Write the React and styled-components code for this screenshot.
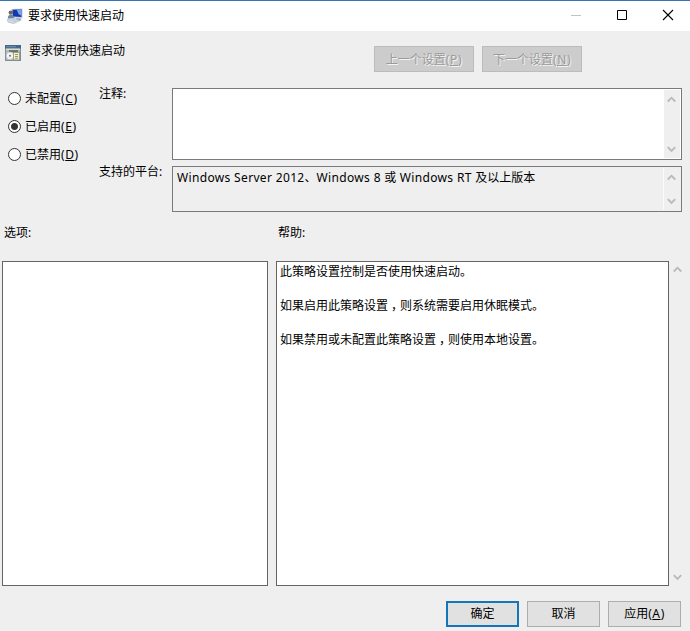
import React, { useState } from 'react';
import styled, { createGlobalStyle } from 'styled-components';

const GlobalStyle = createGlobalStyle`
  * {
    box-sizing: border-box;
  }
  body {
    margin: 0;
    background: #efefef;
  }
`;

const Window = styled.div`
  display: flex;
  flex-direction: column;
  width: 690px;
  height: 631px;
  overflow: hidden;
  background: #efefef;
  color: #000;
  font-family: "Noto Sans", "Noto Sans CJK SC", sans-serif;
  font-size: 12px;
  line-height: 16px;
`;

const TitleBar = styled.header`
  display: flex;
  align-items: center;
  height: 31px;
  padding: 0 16px 0 7px;
  border-top: 1px solid #3577b5;
  background: #fff;
`;

const Title = styled.span`
  flex: 1;
  margin-left: 5px;
`;

const WindowControls = styled.div`
  display: flex;
  gap: 34px;
  padding-bottom: 2px;
`;

const Header = styled.div`
  display: flex;
  height: 57px;
  padding-left: 5px;
`;

const HeaderIcon = styled.div`
  width: 16px;
  padding-top: 14px;
`;

const PolicyName = styled.div`
  width: 345px;
  padding: 12px 0 0 8px;
`;

const NavButtons = styled.div`
  display: flex;
  gap: 8px;
  padding: 15px 0 0 8px;
`;

const Button = styled.button`
  width: ${(props) => (props.$wide ? 100 : 73)}px;
  height: 26px;
  padding: 0;
  border: ${(props) => (props.$primary ? '2px solid #1874b8' : '1px solid #adadad')};
  background: #e1e1e1;
  color: #000;
  font: inherit;

  &:disabled {
    padding-top: 1px;
    border-color: #bcbcbc;
    background: #cccccc;
    color: #9b9b9b;
    text-shadow: 1px 1px 0 #f4f4f4;
  }
`;

const AccessKey = styled.span`
  letter-spacing: 0.6px;
`;

const Settings = styled.div`
  display: flex;
  height: 124px;
`;

const RadioGroup = styled.div`
  display: flex;
  flex-direction: column;
  gap: 12px;
  width: 99px;
  padding: 2px 0 0 8px;
`;

const RadioLabel = styled.label`
  display: flex;
  align-items: center;
  gap: 4px;
  height: 16px;
`;

const RadioText = styled.span`
  padding-top: 2px;
`;

const Radio = styled.input`
  appearance: none;
  width: 13px;
  height: 13px;
  margin: 0;
  border: 1px solid #333;
  border-radius: 50%;
  background: #fff;

  &:checked {
    background: radial-gradient(circle, #333 3px, #fff 4px);
  }
`;

const FieldGrid = styled.div`
  display: grid;
  grid-template-columns: 73px 510px;
  grid-template-rows: 72px 46px;
  row-gap: 6px;
`;

const FieldLabel = styled.div`
  margin-top: -2px;
`;

const Field = styled.div`
  display: flex;
  border: 1px solid #7a7a7a;
  padding: 1px;
  background: ${(props) => (props.$readOnly ? '#efefef' : '#fff')};
`;

const FieldText = styled.div`
  flex: 1;
  padding: 2px 0 0 3px;
  white-space: nowrap;
`;

const Latin = styled.span`
  letter-spacing: 0.34px;
`;

const ScrollBar = styled.div`
  display: flex;
  flex-direction: column;
  align-items: center;
  justify-content: space-between;
  width: ${(props) => (props.$outer ? 17 : 16)}px;
  padding: ${(props) => (props.$outer ? '5px 0 5px' : '6px 1px 5px 0')};
  background: #efefef;
  box-shadow: ${(props) => (props.$divided ? '-1px 0 0 #fbfbfb' : 'none')};
`;

const PanelLabels = styled.div`
  display: flex;
  height: 49px;
  padding: 13px 0 0 4px;
`;

const PanelLabel = styled.div`
  width: 274px;
`;

const Panels = styled.div`
  display: flex;
  height: 325px;
  padding-left: 2px;
`;

const OptionsPanel = styled.div`
  width: 266px;
  margin-right: 8px;
  border: 1px solid #646464;
  background: #fff;
`;

const HelpPanel = styled.div`
  width: 393px;
  padding: 1px 3px;
  border: 1px solid #646464;
  background: #fff;
  line-height: 17px;
`;

const Paragraph = styled.p`
  margin: 0 0 17px;
`;

// half-width glyph centred in a full-width cell
const Comma = styled.span`
  padding: 0 3px;
  font-feature-settings: "halt";
`;

const Footer = styled.footer`
  display: flex;
  justify-content: flex-end;
  gap: 8px;
  padding: 15px 9px 0 0;
`;

const Chevron = ({ down }) => (
  <svg width="9" height="7" viewBox="0 0 9 7" fill="none" stroke="#b9b9b9" strokeWidth="1.8">
    <path d={down ? 'M0.8 1.2L4.5 5L8.2 1.2' : 'M0.8 5.5L4.5 1.7L8.2 5.5'} />
  </svg>
);

const Scroll = (props) => (
  <ScrollBar {...props}>
    <Chevron />
    <Chevron down />
  </ScrollBar>
);

const Key = ({ children }) => (
  <AccessKey>(<u>{children}</u>)</AccessKey>
);

const ComputerIcon = () => (
  <svg width="16" height="16" viewBox="0 0 16 16">
    <path d="M4.5 1L15.5 0.5V10.5L5 9.5Z" fill="#c3cede" />
    <path d="M5.5 1.8L14.5 1.3V9L6 8.5Z" fill="#1537ae" />
    <path d="M9.5 1.6L14.5 1.3V8L11.5 6Z" fill="#7aa2ea" />
    <path d="M9 10.3H13.5L14.5 12.5H8Z" fill="#9ba7b8" />
    <circle cx="3.8" cy="4.6" r="2.2" fill="#6b685b" />
    <path d="M0.8 10.5Q0.8 6.8 3.8 6.8Q7 6.8 7.3 10.5Z" fill="#6585ad" />
    <path d="M0.5 11.5L6 10L13 12.5L6.5 15.6L1 14Z" fill="#dce2ea" stroke="#98a6b8" strokeWidth="0.6" />
    <path d="M2.5 12.2L9 14M4.5 11.2L10.5 13.2" stroke="#a8b4c3" strokeWidth="0.6" />
  </svg>
);

const PolicyIcon = () => (
  <svg width="16" height="16" viewBox="0 0 16 16">
    <rect width="16" height="16" fill="#7d8f9c" />
    <rect width="16" height="3.5" fill="#44658c" />
    <rect x="1" y="1.4" width="10" height="0.8" fill="#7e9bb8" />
    <rect x="1" y="3.5" width="14" height="2" fill="#dcdcc8" />
    <rect x="1" y="5.5" width="14" height="9.5" fill="#b4bcb8" />
    <rect x="4" y="5.3" width="9" height="1.5" fill="#50606a" />
    <circle cx="5" cy="10.8" r="3.8" fill="#f4f4f4" stroke="#a3afb2" strokeWidth="0.5" />
    <circle cx="5" cy="10.8" r="1" fill="#77705d" />
    <rect x="8.5" y="7.5" width="6" height="7.5" fill="#f4f0cc" stroke="#8b8768" strokeWidth="0.7" />
    <path d="M10 9.5H13M10 11.5H13M10 13.3H13" stroke="#76806a" strokeWidth="0.8" />
  </svg>
);

const options = [
  { value: 'unset', text: '未配置', accessKey: 'C' },
  { value: 'enabled', text: '已启用', accessKey: 'E' },
  { value: 'disabled', text: '已禁用', accessKey: 'D' },
];

function App() {
  const [state, setState] = useState('enabled');

  return (
    <Window>
      <GlobalStyle />
      <TitleBar>
        <ComputerIcon />
        <Title>要求使用快速启动</Title>
        <WindowControls>
          <svg width="12" height="12" viewBox="0 0 12 12">
            <path d="M1 6.5H11" stroke="#bdc4c6" />
          </svg>
          <svg width="12" height="12" viewBox="0 0 12 12" fill="none" stroke="#000">
            <path d="M1.5 1.5H10.5V10.5H1.5Z" />
          </svg>
          <svg width="12" height="12" viewBox="0 0 12 12" stroke="#000" strokeWidth="1.1">
            <path d="M1 1L11 11M11 1L1 11" />
          </svg>
        </WindowControls>
      </TitleBar>

      <Header>
        <HeaderIcon><PolicyIcon /></HeaderIcon>
        <PolicyName>要求使用快速启动</PolicyName>
        <NavButtons>
          <Button $wide disabled>上一个设置<Key>P</Key></Button>
          <Button $wide disabled>下一个设置<Key>N</Key></Button>
        </NavButtons>
      </Header>

      <Settings>
        <RadioGroup>
          {options.map((o) => (
            <RadioLabel key={o.value}>
              <Radio
                type="radio"
                name="state"
                checked={state === o.value}
                onChange={() => setState(o.value)}
              />
              <RadioText>{o.text}<Key>{o.accessKey}</Key></RadioText>
            </RadioLabel>
          ))}
        </RadioGroup>
        <FieldGrid>
          <FieldLabel>注释:</FieldLabel>
          <Field>
            <FieldText />
            <Scroll />
          </Field>
          <FieldLabel>支持的平台:</FieldLabel>
          <Field $readOnly>
            <FieldText>
              <Latin>Windows Server 2012</Latin>、<Latin>Windows 8 </Latin>或<Latin> Windows RT </Latin>及以上版本
            </FieldText>
            <Scroll $divided />
          </Field>
        </FieldGrid>
      </Settings>

      <PanelLabels>
        <PanelLabel>选项:</PanelLabel>
        <PanelLabel>帮助:</PanelLabel>
      </PanelLabels>

      <Panels>
        <OptionsPanel />
        <HelpPanel>
          <Paragraph>此策略设置控制是否使用快速启动。</Paragraph>
          <Paragraph>如果启用此策略设置<Comma>，</Comma>则系统需要启用休眠模式。</Paragraph>
          <Paragraph>如果禁用或未配置此策略设置<Comma>，</Comma>则使用本地设置。</Paragraph>
        </HelpPanel>
        <Scroll $outer />
      </Panels>

      <Footer>
        <Button $primary>确定</Button>
        <Button>取消</Button>
        <Button>应用<Key>A</Key></Button>
      </Footer>
    </Window>
  );
}

export default App;
